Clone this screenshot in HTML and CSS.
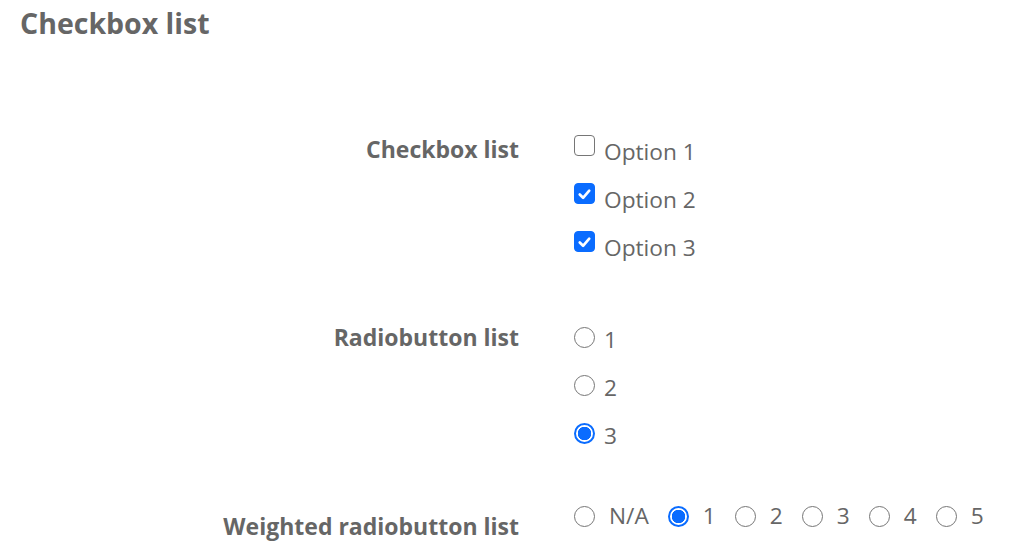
FILE: index.html
```html
<!DOCTYPE html>
<html>
<head>
<meta charset="utf-8">
<link rel="stylesheet" href="styles.css">
</head>
<body>
<h1 class="title">Checkbox list</h1>
<div class="form">
  <div class="field">
    <div class="field-label">Checkbox list</div>
    <div class="options">
      <label class="option"><span class="check"></span><span class="opt-text">Option 1</span></label>
      <label class="option"><span class="check checked"><svg viewBox="0 0 20 20" width="20" height="20"><path d="M5 10.5 L8.5 14 L15 6.5" fill="none" stroke="#fff" stroke-width="2.8" stroke-linecap="round" stroke-linejoin="round"/></svg></span><span class="opt-text">Option 2</span></label>
      <label class="option"><span class="check checked"><svg viewBox="0 0 20 20" width="20" height="20"><path d="M5 10.5 L8.5 14 L15 6.5" fill="none" stroke="#fff" stroke-width="2.8" stroke-linecap="round" stroke-linejoin="round"/></svg></span><span class="opt-text">Option 3</span></label>
    </div>
  </div>
  <div class="field field-radio">
    <div class="field-label">Radiobutton list</div>
    <div class="options">
      <label class="option"><span class="radio"></span><span class="opt-text">1</span></label>
      <label class="option"><span class="radio"></span><span class="opt-text">2</span></label>
      <label class="option"><span class="radio checked"></span><span class="opt-text">3</span></label>
    </div>
  </div>
  <div class="field field-weighted">
    <div class="field-label">Weighted radiobutton list</div>
    <div class="inline-options">
      <label class="inline-option"><span class="radio"></span><span class="opt-text">N/A</span></label>
      <label class="inline-option"><span class="radio checked"></span><span class="opt-text">1</span></label>
      <label class="inline-option"><span class="radio"></span><span class="opt-text">2</span></label>
      <label class="inline-option"><span class="radio"></span><span class="opt-text">3</span></label>
      <label class="inline-option"><span class="radio"></span><span class="opt-text">4</span></label>
      <label class="inline-option"><span class="radio"></span><span class="opt-text">5</span></label>
    </div>
  </div>
</div>
</body>
</html>
```

FILE: styles.css
```css
html, body {
  margin: 0;
  padding: 0;
  background: #fff;
}
body {
  font-family: "Open Sans", "Liberation Sans", sans-serif;
  color: #666;
  width: 1012px;
  height: 550px;
  overflow: hidden;
}
.title {
  margin: 0;
  padding: 5px 0 0 20px;
  font-size: 28.5px;
  font-weight: 700;
  line-height: 37px;
  color: #666;
}
.form {
  padding-top: 86px;
}
.field {
  display: grid;
  grid-template-columns: 519px 1fr;
  column-gap: 55px;
}
.field-radio {
  margin-top: 44px;
}
.field-weighted {
  margin-top: 42px;
}
.field-label {
  text-align: right;
  font-weight: 700;
  font-size: 23px;
  line-height: 42px;
}
.options {
  display: flex;
  flex-direction: column;
}
.option {
  display: flex;
  align-items: center;
  height: 48px;
}
.opt-text {
  font-size: 22.7px;
  line-height: 48px;
}
.check {
  box-sizing: border-box;
  width: 21px;
  height: 21px;
  border: 1.5px solid #767676;
  border-radius: 4px;
  margin-right: 9px;
  margin-top: -13px;
  display: flex;
  align-items: center;
  justify-content: center;
  flex: none;
}
.check.checked {
  background: #0a6cff;
  border-color: #0a6cff;
}
.check svg {
  display: block;
}
.radio {
  box-sizing: border-box;
  width: 21px;
  height: 21px;
  border: 1.5px solid #767676;
  border-radius: 50%;
  margin-right: 9px;
  margin-top: -6px;
  flex: none;
}
.radio.checked {
  border: 2px solid #0a6cff;
  background: radial-gradient(circle, #0a6cff 0 6.5px, #fff 7px);
}
.inline-options {
  display: flex;
  align-items: center;
  height: 28px;
}
.inline-option {
  display: flex;
  align-items: center;
  margin-right: 19px;
}
.inline-option .radio {
  margin-top: 0;
  margin-right: 14px;
}
.inline-option .opt-text {
  line-height: 28px;
}
.field-weighted .field-label {
  line-height: 28px;
  padding-top: 10px;
}
```
